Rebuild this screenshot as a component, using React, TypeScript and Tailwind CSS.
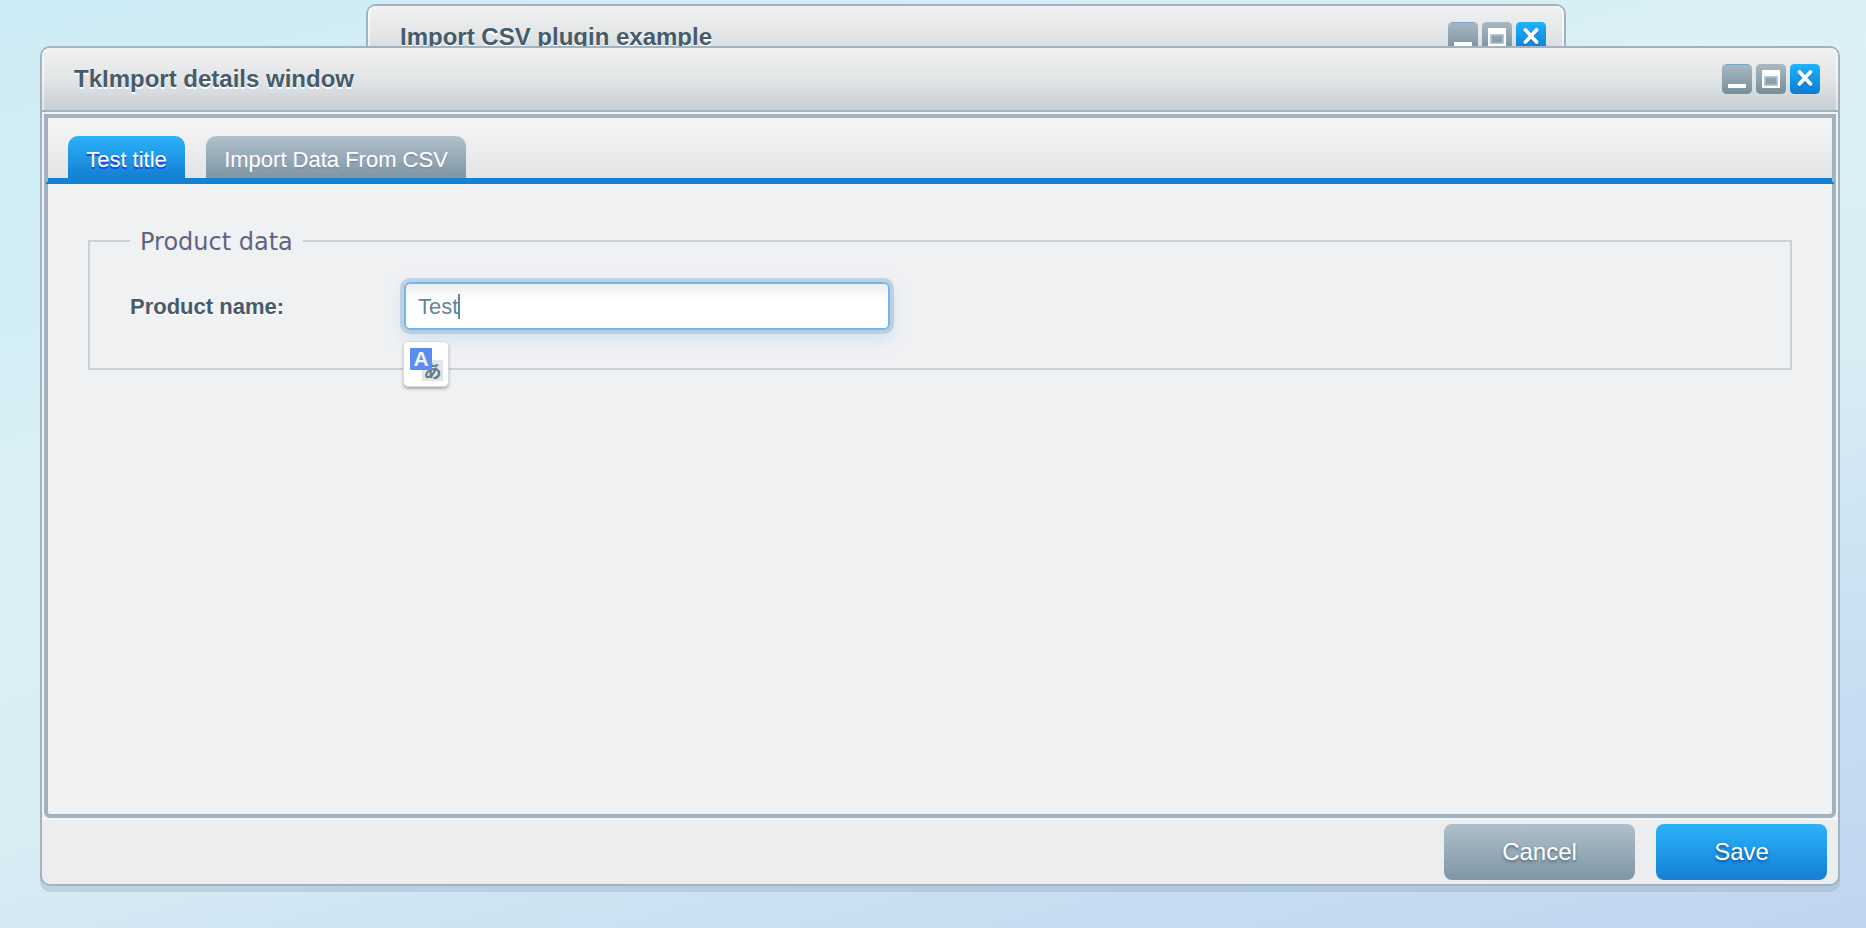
import React from "react";

function Controls() {
  return (
    <div className="flex gap-1">
      <svg width="30" height="30" viewBox="0 0 30 30">
        <defs>
          <linearGradient id="gray" x1="0" y1="0" x2="0" y2="1">
            <stop offset="0" stopColor="#a9b8c3" />
            <stop offset="1" stopColor="#778e9c" />
          </linearGradient>
          <linearGradient id="blue" x1="0" y1="0" x2="0" y2="1">
            <stop offset="0" stopColor="#1fb2ff" />
            <stop offset="1" stopColor="#0a7bd3" />
          </linearGradient>
        </defs>
        <rect width="30" height="30" rx="4.5" fill="url(#gray)" />
        <rect x="4" width="22" height="1" fill="#72a7cf" />
        <rect x="6" y="20" width="18" height="4" fill="#fff" />
      </svg>
      <svg width="30" height="30" viewBox="0 0 30 30">
        <rect width="30" height="30" rx="4.5" fill="url(#gray)" />
        <path fillRule="evenodd" d="M6 6h18v18H6zM8 12v10h14V12z" fill="#fff" />
        <rect x="8.75" y="12.75" width="12.500" height="8.500" fill="none" stroke="#bcc9d1" strokeWidth="1.500" />
      </svg>
      <svg width="30" height="30" viewBox="0 0 30 30">
        <rect width="30" height="30" rx="4.5" fill="url(#blue)" />
        <path d="M9.500 9.500l11 12M20.500 9.500l-11 12" stroke="#0868b5" strokeOpacity=".5" strokeWidth="4" strokeLinecap="round" />
        <path d="M9.500 8l11 12M20.500 8l-11 12" stroke="#fff" strokeWidth="3.800" strokeLinecap="round" />
      </svg>
    </div>
  );
}

function TitleBar({ title }: { title: string }) {
  return (
    <div className="flex h-16 shrink-0 items-start justify-between rounded-t-[8px] border-b-2 border-[#a2b3bf] bg-linear-to-b from-[#f1f1f1] via-[#e2e5e6] to-[#c6cfd7] pr-[18px] pl-8 pt-4 shadow-[inset_2px_0_0_rgba(255,255,255,0.55),inset_-2px_0_0_rgba(255,255,255,0.55)]">
      <h1 className="text-[24px] leading-[30px] font-bold text-[#475c6b] [text-shadow:0_2px_0_#fff]">{title}</h1>
      <Controls />
    </div>
  );
}

function TranslateBadge() {
  return (
    <div className="absolute top-[59px] left-[-1px] size-[46px] rounded-[5px] border border-[#d8dade] bg-white p-[6px] shadow-[0_2px_3px_rgba(0,0,0,0.28)]">
      <div className="relative size-[33px]">
        <div className="absolute right-0 bottom-0 flex size-[21px] items-center justify-center bg-[#e4e5e6] pb-px font-['Noto_Sans_CJK_JP',sans-serif] text-[18px] leading-none font-bold text-[#607d8b]">あ</div>
        <div className="absolute top-0 left-0 flex size-[22px] items-center justify-center rounded-[1px] bg-[#5b8def] pb-[2px] text-[21px] leading-none font-bold text-[#f3f3f3]">A</div>
      </div>
    </div>
  );
}

export default function App() {
  return (
    <main className="relative h-[928px] w-[1866px] overflow-hidden bg-[linear-gradient(165deg,#ceecf5_0%,#d4eef5_24%,#ddf0f6_38%,#d8ecf4_60%,#c8dff2_81%,#c4daf1_90%,#c0d6ef_100%)] font-['Liberation_Sans',Arial,sans-serif]">
      <section className="absolute top-1 left-[366px] h-[600px] w-[1200px] rounded-[10px] border-2 border-[#a2b3bf] bg-[#f0f1f3]">
        <TitleBar title="Import CSV plugin example" />
      </section>

      <section className="absolute top-[46px] left-10 flex h-[840px] w-[1800px] flex-col rounded-[10px] border-2 border-[#a2b3bf] bg-[#ebedee] shadow-[0_6px_0_rgba(120,145,165,0.25)]">
        <TitleBar title="TkImport details window" />
        <div className="flex h-[708px] shrink-0 flex-col bg-[#f2f4f6] p-[2px]">
          <div className="flex flex-1 flex-col rounded-b-[6px] border-4 border-[#a2b3bf] bg-[#f0f1f3]">
            <nav className="-mx-[2px] border-b-[2px] border-[#1581d4]">
              <div className="mx-[2px] flex h-16 items-end gap-[21px] border-b-4 border-[#1581d4] bg-linear-to-b from-[#f6f6f7] to-[#e3e4e6] pl-5 text-[22px]">
                <button className="h-[42px] w-[117px] rounded-t-[10px] bg-linear-to-b from-[#2cb2f9] to-[#157fd3] pt-1 text-white [text-shadow:0_2px_0_#1547e8]">Test title</button>
                <button className="h-[42px] w-[260px] rounded-t-[10px] bg-linear-to-b from-[#b0c0ca] to-[#7f96a5] pt-1 whitespace-nowrap text-white [text-shadow:0_2px_0_#8590ab]">Import Data From CSV</button>
              </div>
            </nav>
            <div className="px-10 pt-[38px]">
              <fieldset className="h-[148px] border-2 border-[#cad2d9] pl-10">
                <legend className="px-[10px] pt-[3px] font-['DejaVu_Sans',sans-serif] text-[24px] leading-[35px] text-[#5f6480]">Product data</legend>
                <div className="mt-[22px] flex h-12 items-center">
                  <label className="w-[274px] text-[22px] font-bold text-[#475c6b] [text-shadow:0_2px_0_#fff]">Product name:</label>
                  <div className="relative">
                    <div className="flex h-12 w-[486px] items-center rounded-[6px] border-2 border-[#72b5f0] bg-linear-to-b from-[#eceeed] to-white to-40% pl-3 text-[22px] text-[#66859a] shadow-[0_0_0_4px_rgba(165,192,212,0.6),0_6px_16px_2px_rgba(114,181,240,0.28)]">
                      <span>Test</span>
                      <span className="h-[25px] w-[2px] bg-[#66859a]" />
                    </div>
                    <TranslateBadge />
                  </div>
                </div>
              </fieldset>
            </div>
          </div>
        </div>
        <footer className="flex h-16 items-center justify-end gap-[21px] pr-[11px] text-[24px] text-white">
          <button className="h-14 w-[191px] rounded-[8px] bg-linear-to-b from-[#b0c0ca] to-[#7f96a5] [text-shadow:0_2px_3px_#536b7b]">Cancel</button>
          <button className="h-14 w-[171px] rounded-[8px] bg-linear-to-b from-[#2cb2f9] to-[#157fd3] [text-shadow:0_2px_3px_#0c4fa0]">Save</button>
        </footer>
      </section>
    </main>
  );
}
